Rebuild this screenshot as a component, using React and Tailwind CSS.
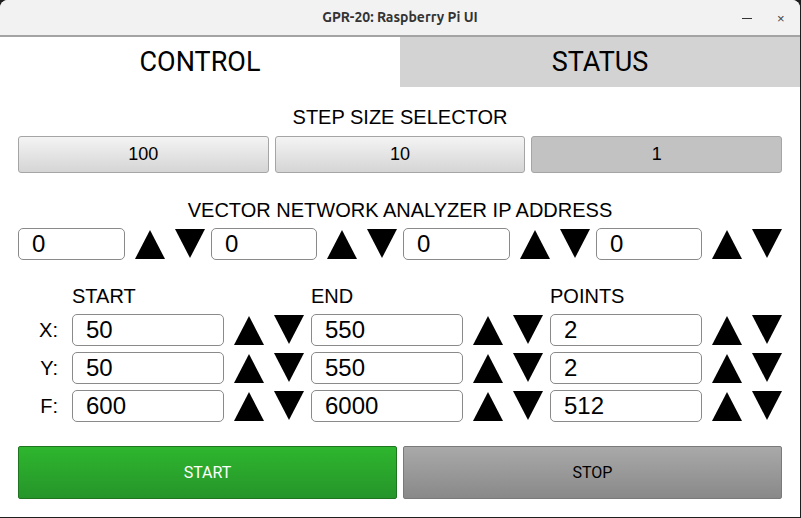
import React, { useState } from "react";

const sans = { fontFamily: '"Liberation Sans", Arial, sans-serif' };
const roboto = { fontFamily: 'Roboto, "Liberation Sans", sans-serif' };

function Up() {
    return (
        <button className="w-[30px] h-[32px] flex items-center justify-center shrink-0">
            <svg width="30" height="30" viewBox="0 0 30 30">
                <polygon points="15,1 30,30 0,30" fill="#000" />
            </svg>
        </button>
    );
}

function Down() {
    return (
        <button className="w-[30px] h-[32px] flex items-center justify-center shrink-0">
            <svg width="30" height="30" viewBox="0 0 30 30">
                <polygon points="0,0 30,0 15,29" fill="#000" />
            </svg>
        </button>
    );
}

function Field({ value, width }) {
    return (
        <div
            className={`${width} h-[32px] shrink-0 border border-[#8a8a8a] rounded-[5px] bg-white pl-[13px] flex items-center text-[24px] text-black`}
            style={sans}>
            {value}
        </div>
    );
}

function Spin({ value, width, gap }) {
    return (
        <div className={`flex items-center ${gap}`}>
            <Field value={value} width={width} />
            <div className="ml-[10px]"><Up /></div>
            <div className="ml-[10px]"><Down /></div>
        </div>
    );
}

function App() {
    const [step, setStep] = useState(1);
    const rows = [
        { label: "X:", vals: ["50", "550", "2"] },
        { label: "Y:", vals: ["50", "550", "2"] },
        { label: "F:", vals: ["600", "6000", "512"] },
    ];

    return (
        <div className="w-[801px] h-[518px] bg-[#1e1e1e] overflow-hidden">
            <div className="w-[800px] h-[517px] bg-white rounded-t-[8px] overflow-hidden flex flex-col">
                {/* title bar */}
                <div className="h-[37px] bg-[#f2f2f2] border-b-2 border-[#a3a3a3] relative flex items-center justify-center shrink-0">
                    <span className="text-[14px] font-bold text-[#333]" style={{ fontFamily: '"Ubuntu", "Liberation Sans", sans-serif' }}>
                        GPR-20: Raspberry Pi UI
                    </span>
                    <span className="absolute left-[742px] top-[18px] w-[10px] h-[1px] bg-[#333]"></span>
                    <span className="absolute left-[777px] top-[9px] text-[13px] text-[#444]" style={sans}>×</span>
                </div>

                {/* tabs */}
                <div className="flex h-[50px] shrink-0 text-[27px] text-black" style={roboto}>
                    <div className="w-[400px] flex items-center justify-center bg-white">CONTROL</div>
                    <div className="w-[400px] flex items-center justify-center bg-[#d3d3d3]">STATUS</div>
                </div>

                <div className="px-[18px] flex flex-col text-black" style={sans}>
                    <div className="mt-[18px] h-[24px] leading-[24px] text-center text-[20px]">STEP SIZE SELECTOR</div>
                    <div className="mt-[7px] flex gap-[6px]">
                        {[100, 10, 1].map(s => (
                            <button
                                key={s}
                                onClick={() => setStep(s)}
                                className={`flex-1 h-[37px] rounded-[3px] border border-[#a5a5a5] text-[18px] ${step === s ? "bg-[#c2c2c2]" : "bg-gradient-to-b from-[#f4f4f4] to-[#d5d5d5]"}`}>
                                {s}
                            </button>
                        ))}
                    </div>

                    <div className="mt-[25px] h-[24px] leading-[24px] text-center text-[20px]">VECTOR NETWORK ANALYZER IP ADDRESS</div>
                    <div className="mt-[6px] flex items-center">
                        <Spin value="0" width="w-[107px]" gap="mr-[6px]" />
                        <Spin value="0" width="w-[106px]" gap="mr-[6px]" />
                        <Spin value="0" width="w-[107px]" gap="mr-[6px]" />
                        <Spin value="0" width="w-[106px]" gap="" />
                    </div>

                    <div className="mt-[24px] h-[24px] leading-[24px] flex text-[20px]">
                        <div className="w-[54px]"></div>
                        <div className="w-[239px]">START</div>
                        <div className="w-[239px]">END</div>
                        <div>POINTS</div>
                    </div>
                    <div className="mt-[6px] flex flex-col gap-[6px]">
                        {rows.map(r => (
                            <div key={r.label} className="flex items-center">
                                <div className="w-[54px] pr-[14px] text-right text-[20px]">{r.label}</div>
                                <Spin value={r.vals[0]} width="w-[152px]" gap="mr-[7px]" />
                                <Spin value={r.vals[1]} width="w-[152px]" gap="mr-[7px]" />
                                <Spin value={r.vals[2]} width="w-[152px]" gap="" />
                            </div>
                        ))}
                    </div>

                    <div className="mt-[24px] flex gap-[6px] text-[16px]" style={roboto}>
                        <button className="flex-1 h-[53px] rounded-[2px] border border-[#1f741f] bg-gradient-to-b from-[#2eb62e] to-[#26952a] text-white">START</button>
                        <button className="flex-1 h-[53px] rounded-[2px] border border-[#7a7a7a] bg-gradient-to-b from-[#a9a9a9] to-[#898989] text-black">STOP</button>
                    </div>
                </div>
            </div>
        </div>
    );
}

export default App;
